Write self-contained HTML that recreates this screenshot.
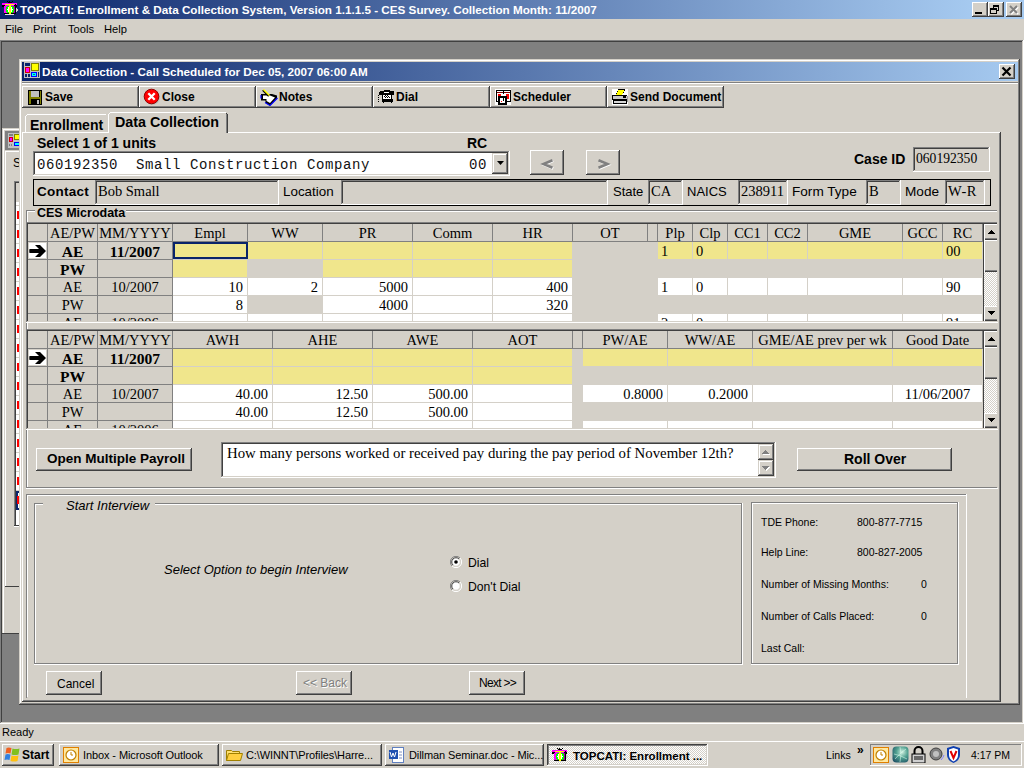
<!DOCTYPE html><html><head><meta charset="utf-8"><style>
html,body{margin:0;padding:0;width:1024px;height:768px;overflow:hidden;background:#d4d0c8;position:relative}
div{position:absolute;box-sizing:border-box;white-space:nowrap}
.s{font-family:"Liberation Sans",sans-serif;font-size:11px;color:#000;line-height:1}
.b{font-family:"Liberation Sans",sans-serif;font-weight:bold;font-size:12px;color:#000;line-height:1}
.r{font-family:"Liberation Serif",serif;font-size:15px;color:#000;line-height:1}
.m{font-family:"Liberation Mono",monospace;font-size:15px;color:#000;line-height:1}
svg{position:absolute}
</style></head><body>
<div style="left:0px;top:0px;width:1024px;height:19px;background:linear-gradient(to right,#0a246a 0px,#a6caf0 975px,#a6caf0 1024px)"></div>
<svg style="left:0px;top:0px" width="19" height="17" viewBox="0 0 19 17" shape-rendering="crispEdges"><rect x="2" y="3" width="15" height="3" fill="#ff00ff"/><rect x="2" y="5" width="3" height="2" fill="#000"/><rect x="14" y="5" width="3" height="2" fill="#000"/><rect x="4" y="6" width="11" height="8" fill="#ff00ff"/><rect x="11" y="6" width="4" height="8" fill="#a000a0"/><rect x="15" y="4" width="1" height="10" fill="#000"/><rect x="4" y="13" width="12" height="1" fill="#000"/><circle cx="10" cy="9.5" r="3.3" fill="#fff" stroke="#00ff00" stroke-width="1.4"/><rect x="5" y="4" width="9" height="1" fill="#ffff00"/><rect x="9" y="4" width="2" height="11" fill="#ffff00"/><rect x="7" y="1" width="1" height="1" fill="#000"/><rect x="9" y="1" width="1" height="1" fill="#000"/><rect x="12" y="1" width="1" height="1" fill="#000"/><rect x="8" y="2" width="4" height="1" fill="#000"/><rect x="5" y="14" width="9" height="1" fill="#e0e0e0"/><path d="M16 7l2 3-2 3z" fill="#d0d0d0"/></svg>
<div class="b" style="left:20px;top:3px;color:#fff;font-size:11.7px;line-height:13px">TOPCATI: Enrollment &amp; Data Collection System, Version 1.1.1.5 - CES Survey. Collection Month: 11/2007</div>
<div style="left:972px;top:2px;width:16px;height:15px;background:#d4d0c8;box-shadow:inset -1px -1px #404040,inset 1px 1px #ffffff,inset -2px -2px #808080,inset 2px 2px #d4d0c8"></div>
<div style="left:988px;top:2px;width:16px;height:15px;background:#d4d0c8;box-shadow:inset -1px -1px #404040,inset 1px 1px #ffffff,inset -2px -2px #808080,inset 2px 2px #d4d0c8"></div>
<div style="left:1006px;top:2px;width:16px;height:15px;background:#d4d0c8;box-shadow:inset -1px -1px #404040,inset 1px 1px #ffffff,inset -2px -2px #808080,inset 2px 2px #d4d0c8"></div>
<div style="left:975px;top:12px;width:7px;height:2px;background:#000"></div>
<div style="left:993px;top:5px;width:6px;height:6px;border:1px solid #000;border-top-width:2px"></div>
<div style="left:990px;top:8px;width:7px;height:6px;border:1px solid #000;border-top-width:2px;background:#d4d0c8"></div>
<svg style="left:1006px;top:2px" width="16" height="15" viewBox="0 0 16 15"><path d="M4 4l7 7M11 4l-7 7" stroke="#fff" stroke-width="2" transform="translate(1,1)"/><path d="M4 4l7 7M11 4l-7 7" stroke="#808080" stroke-width="2"/></svg>
<div class="s" style="left:5px;top:23px;font-size:11.2px;line-height:12px">File</div>
<div class="s" style="left:33px;top:23px;font-size:11.2px;line-height:12px">Print</div>
<div class="s" style="left:68px;top:23px;font-size:11.2px;line-height:12px">Tools</div>
<div class="s" style="left:104px;top:23px;font-size:11.2px;line-height:12px">Help</div>
<div style="left:0px;top:40px;width:1024px;height:684px;background:#808080"></div>
<div style="left:0px;top:40px;width:1023px;height:1px;background:#808080"></div>
<div style="left:1px;top:41px;width:1021px;height:1px;background:#404040"></div>
<div style="left:0px;top:40px;width:1px;height:683px;background:#808080"></div>
<div style="left:1px;top:41px;width:1px;height:681px;background:#404040"></div>
<div style="left:1022px;top:41px;width:1px;height:682px;background:#d4d0c8"></div>
<div style="left:1023px;top:40px;width:1px;height:684px;background:#ffffff"></div>
<div style="left:1px;top:722px;width:1022px;height:1px;background:#d4d0c8"></div>
<div style="left:0px;top:723px;width:1024px;height:1px;background:#ffffff"></div>
<div style="left:2px;top:128px;width:18px;height:506px;background:#d4d0c8"></div>
<div style="left:2px;top:128px;width:18px;height:1px;background:#d4d0c8"></div>
<div style="left:2px;top:128px;width:1px;height:506px;background:#d4d0c8"></div>
<div style="left:3px;top:129px;width:17px;height:1px;background:#ffffff"></div>
<div style="left:3px;top:129px;width:1px;height:505px;background:#ffffff"></div>
<div style="left:5px;top:131px;width:15px;height:19px;background:#808080"></div>
<svg style="left:8px;top:133px" width="12" height="15" viewBox="0 0 12 15"><rect x="0" y="0" width="12" height="15" fill="#c0c0c0"/><rect x="1" y="1" width="4" height="2" fill="#808080"/><rect x="1" y="4" width="4" height="5" fill="#d00000"/><rect x="2" y="5" width="2" height="3" fill="#ff00ff"/><rect x="6" y="1" width="6" height="6" fill="#808000"/><rect x="7" y="2" width="5" height="4" fill="#ffff00"/><rect x="6" y="9" width="6" height="4" fill="#0000ff"/><rect x="7" y="10" width="4" height="2" fill="#00ffff"/><rect x="1" y="11" width="1" height="2" fill="#808080"/><rect x="3" y="11" width="1" height="2" fill="#808080"/></svg>
<div style="left:5px;top:151px;width:15px;height:1px;background:#ffffff"></div>
<div style="left:5px;top:152px;width:1px;height:434px;background:#ffffff"></div>
<div class="s" style="left:13px;top:157px;font-size:12px;line-height:12px">S</div>
<div style="left:14px;top:181px;width:1px;height:345px;background:#808080"></div>
<div style="left:15px;top:182px;width:1px;height:343px;background:#404040"></div>
<div style="left:14px;top:181px;width:6px;height:1px;background:#808080"></div>
<div style="left:15px;top:182px;width:5px;height:1px;background:#404040"></div>
<div style="left:16px;top:183px;width:4px;height:18px;background:#d4d0c8"></div>
<div style="left:16px;top:202px;width:3px;height:323px;background:#fff"></div>
<div style="left:16px;top:205px;width:3px;height:1px;background:#d4d0c8"></div>
<div style="left:17px;top:211px;width:2px;height:8px;background:#ff0000"></div>
<div style="left:16px;top:224px;width:3px;height:1px;background:#d4d0c8"></div>
<div style="left:17px;top:230px;width:2px;height:8px;background:#ff0000"></div>
<div style="left:16px;top:243px;width:3px;height:1px;background:#d4d0c8"></div>
<div style="left:17px;top:249px;width:2px;height:8px;background:#ff0000"></div>
<div style="left:16px;top:262px;width:3px;height:1px;background:#d4d0c8"></div>
<div style="left:17px;top:268px;width:2px;height:8px;background:#ff0000"></div>
<div style="left:16px;top:281px;width:3px;height:1px;background:#d4d0c8"></div>
<div style="left:17px;top:287px;width:2px;height:8px;background:#ff0000"></div>
<div style="left:16px;top:300px;width:3px;height:1px;background:#d4d0c8"></div>
<div style="left:17px;top:306px;width:2px;height:8px;background:#ff0000"></div>
<div style="left:16px;top:319px;width:3px;height:1px;background:#d4d0c8"></div>
<div style="left:17px;top:325px;width:2px;height:8px;background:#ff0000"></div>
<div style="left:16px;top:338px;width:3px;height:1px;background:#d4d0c8"></div>
<div style="left:17px;top:344px;width:2px;height:8px;background:#ff0000"></div>
<div style="left:16px;top:357px;width:3px;height:1px;background:#d4d0c8"></div>
<div style="left:17px;top:363px;width:2px;height:8px;background:#ff0000"></div>
<div style="left:16px;top:376px;width:3px;height:1px;background:#d4d0c8"></div>
<div style="left:17px;top:382px;width:2px;height:8px;background:#ff0000"></div>
<div style="left:16px;top:395px;width:3px;height:1px;background:#d4d0c8"></div>
<div style="left:17px;top:401px;width:2px;height:8px;background:#ff0000"></div>
<div style="left:16px;top:414px;width:3px;height:1px;background:#d4d0c8"></div>
<div style="left:17px;top:420px;width:2px;height:8px;background:#ff0000"></div>
<div style="left:16px;top:433px;width:3px;height:1px;background:#d4d0c8"></div>
<div style="left:17px;top:439px;width:2px;height:8px;background:#ff0000"></div>
<div style="left:16px;top:452px;width:3px;height:1px;background:#d4d0c8"></div>
<div style="left:17px;top:458px;width:2px;height:8px;background:#ff0000"></div>
<div style="left:16px;top:471px;width:3px;height:1px;background:#d4d0c8"></div>
<div style="left:17px;top:477px;width:2px;height:8px;background:#ff0000"></div>
<div style="left:16px;top:490px;width:3px;height:1px;background:#d4d0c8"></div>
<div style="left:17px;top:496px;width:2px;height:8px;background:#ff0000"></div>
<div style="left:16px;top:509px;width:3px;height:1px;background:#d4d0c8"></div>
<div style="left:16px;top:491px;width:3px;height:19px;border:2px solid #0a246a;border-right:none"></div>
<div style="left:17px;top:496px;width:2px;height:8px;background:#ff0000"></div>
<div style="left:14px;top:525px;width:6px;height:1px;background:#404040"></div>
<div style="left:14px;top:526px;width:6px;height:1px;background:#ffffff"></div>
<div style="left:5px;top:586px;width:15px;height:1px;background:#404040"></div>
<div style="left:2px;top:633px;width:18px;height:1px;background:#404040"></div>
<div style="left:19px;top:59px;width:1001px;height:646px;background:#d4d0c8"></div>
<div style="left:19px;top:59px;width:1000px;height:1px;background:#d4d0c8"></div>
<div style="left:19px;top:59px;width:1px;height:645px;background:#d4d0c8"></div>
<div style="left:20px;top:60px;width:998px;height:1px;background:#ffffff"></div>
<div style="left:20px;top:60px;width:1px;height:643px;background:#ffffff"></div>
<div style="left:1018px;top:60px;width:1px;height:644px;background:#808080"></div>
<div style="left:20px;top:703px;width:999px;height:1px;background:#808080"></div>
<div style="left:1019px;top:59px;width:1px;height:646px;background:#404040"></div>
<div style="left:19px;top:704px;width:1001px;height:1px;background:#404040"></div>
<div style="left:22px;top:62px;width:996px;height:19px;background:linear-gradient(to right,#0a246a,#a6caf0)"></div>
<svg style="left:24px;top:62px" width="16" height="16" viewBox="0 0 16 16"><rect x="0" y="0" width="16" height="16" fill="#c0c0c0"/><rect x="1" y="1" width="5" height="3" fill="#0a246a"/><rect x="1" y="5" width="5" height="6" fill="#d00000"/><rect x="2" y="6" width="3" height="4" fill="#ff00ff"/><rect x="7" y="1" width="8" height="8" fill="#808000"/><rect x="8" y="2" width="6" height="6" fill="#ffff00"/><rect x="7" y="10" width="6" height="5" fill="#0000ff"/><rect x="8" y="11" width="4" height="3" fill="#00ffff"/><rect x="9" y="12" width="2" height="1" fill="#008080"/><rect x="1" y="12" width="2" height="3" fill="#0a246a"/><rect x="4" y="12" width="2" height="3" fill="#0a246a"/><rect x="14" y="10" width="1" height="5" fill="#0a246a"/></svg>
<div class="b" style="left:42px;top:65px;color:#fff;font-size:11.7px;line-height:13px">Data Collection - Call Scheduled for Dec 05, 2007 06:00 AM</div>
<div style="left:999px;top:64px;width:16px;height:15px;background:#d4d0c8;box-shadow:inset -1px -1px #404040,inset 1px 1px #ffffff,inset -2px -2px #808080,inset 2px 2px #d4d0c8"></div>
<svg style="left:999px;top:64px" width="16" height="15" viewBox="0 0 16 15"><path d="M3.5 3.5l8 8M11.5 3.5l-8 8" stroke="#000" stroke-width="2.2"/></svg>
<div style="left:22px;top:82px;width:996px;height:1px;background:#808080"></div>
<div style="left:22px;top:83px;width:996px;height:1px;background:#ffffff"></div>
<div style="left:22px;top:86px;width:117px;height:22px;background:#d4d0c8;box-shadow:inset -1px -1px #404040,inset 1px 1px #ffffff,inset -2px -2px #808080,inset 2px 2px #d4d0c8"></div>
<div class="b" style="left:45px;top:91px;font-size:12px;line-height:12px">Save</div>
<div style="left:139px;top:86px;width:117px;height:22px;background:#d4d0c8;box-shadow:inset -1px -1px #404040,inset 1px 1px #ffffff,inset -2px -2px #808080,inset 2px 2px #d4d0c8"></div>
<div class="b" style="left:162px;top:91px;font-size:12px;line-height:12px">Close</div>
<div style="left:256px;top:86px;width:117px;height:22px;background:#d4d0c8;box-shadow:inset -1px -1px #404040,inset 1px 1px #ffffff,inset -2px -2px #808080,inset 2px 2px #d4d0c8"></div>
<div class="b" style="left:279px;top:91px;font-size:12px;line-height:12px">Notes</div>
<div style="left:373px;top:86px;width:117px;height:22px;background:#d4d0c8;box-shadow:inset -1px -1px #404040,inset 1px 1px #ffffff,inset -2px -2px #808080,inset 2px 2px #d4d0c8"></div>
<div class="b" style="left:396px;top:91px;font-size:12px;line-height:12px">Dial</div>
<div style="left:490px;top:86px;width:117px;height:22px;background:#d4d0c8;box-shadow:inset -1px -1px #404040,inset 1px 1px #ffffff,inset -2px -2px #808080,inset 2px 2px #d4d0c8"></div>
<div class="b" style="left:513px;top:91px;font-size:12px;line-height:12px">Scheduler</div>
<div style="left:607px;top:86px;width:117px;height:22px;background:#d4d0c8;box-shadow:inset -1px -1px #404040,inset 1px 1px #ffffff,inset -2px -2px #808080,inset 2px 2px #d4d0c8"></div>
<div class="b" style="left:630px;top:91px;font-size:12px;line-height:12px">Send Document</div>
<svg style="left:28px;top:90px" width="14" height="15" viewBox="0 0 14 15" shape-rendering="crispEdges"><rect x="0" y="0" width="14" height="15" fill="#000"/><rect x="1" y="1" width="2" height="13" fill="#808000"/><rect x="12" y="1" width="1" height="13" fill="#808000"/><rect x="1" y="7" width="12" height="2" fill="#808000"/><rect x="3" y="1" width="8" height="6" fill="#c0c0c0"/><rect x="9" y="10" width="2" height="4" fill="#c0c0c0"/></svg>
<svg style="left:143px;top:88px" width="18" height="18" viewBox="0 0 18 18"><circle cx="9.5" cy="9.5" r="7.3" fill="#a0a8a8" opacity="0.6"/><circle cx="8.5" cy="8.5" r="7.3" fill="#ff0000" stroke="#900000" stroke-width="1"/><path d="M5.3 5.3l6.4 6.4M11.7 5.3l-6.4 6.4" stroke="#fff" stroke-width="2.3"/></svg>
<svg style="left:258px;top:86px" width="22" height="20" viewBox="0 0 22 20"><path d="M3 8H14L19 9.5V12.5L12 19.5L7.5 17V14.5H3Z" fill="#000"/><path d="M5 9.5H12L17 11.5L12 17L8.5 15V13H5Z" fill="#fff"/><path d="M3 9V12.5" stroke="#0000ff" stroke-width="1.2"/><path d="M7 16.5L12 19.5L19.5 12" stroke="#0000ff" stroke-width="1.2" fill="none"/><path d="M5.5 3.5L11.5 9.5" stroke="#000" stroke-width="1.6" transform="translate(-0.8,0.8)"/><path d="M5.5 3.5L11.5 9.5" stroke="#ffff00" stroke-width="1.4"/></svg>
<svg style="left:374px;top:86px" width="22" height="20" viewBox="0 0 22 20" shape-rendering="crispEdges"><rect x="10" y="4" width="6" height="2" fill="#000"/><rect x="6" y="5" width="14" height="3" fill="#000"/><rect x="5" y="6" width="3" height="3" fill="#000"/><rect x="17" y="5" width="3" height="4" fill="#000"/><rect x="10" y="6" width="5" height="1" fill="#fff"/><rect x="8" y="8" width="10" height="5" fill="#000"/><rect x="9" y="9" width="8" height="4" fill="#fff"/><rect x="10" y="10" width="1" height="1" fill="#000"/><rect x="11" y="9" width="1" height="1" fill="#000"/><rect x="12" y="10" width="1" height="1" fill="#000"/><rect x="13" y="9" width="1" height="1" fill="#000"/><rect x="14" y="10" width="1" height="1" fill="#000"/><rect x="15" y="11" width="1" height="1" fill="#000"/><rect x="11" y="11" width="1" height="1" fill="#000"/><rect x="13" y="11" width="1" height="1" fill="#000"/><rect x="8" y="13" width="11" height="3" fill="#000"/><rect x="9" y="16" width="1" height="1" fill="#000"/><rect x="17" y="16" width="1" height="1" fill="#000"/><rect x="4" y="9" width="1" height="1" fill="#000"/><rect x="4" y="11" width="1" height="1" fill="#000"/><rect x="4" y="13" width="1" height="1" fill="#000"/><rect x="4" y="15" width="1" height="1" fill="#000"/></svg>
<svg style="left:492px;top:86px" width="20" height="20" viewBox="0 0 20 20" shape-rendering="crispEdges"><rect x="3" y="3" width="16" height="16" fill="#fff"/><rect x="4" y="4" width="15" height="12" fill="#000"/><rect x="5" y="5" width="13" height="10" fill="#fff"/><rect x="5" y="6" width="13" height="1" fill="#800000"/><rect x="11" y="5" width="1" height="3" fill="#000"/><rect x="6" y="8" width="3" height="2" fill="#ff0000"/><rect x="14" y="8" width="3" height="3" fill="#ff0000"/><rect x="15" y="11" width="2" height="2" fill="#ff0000"/><rect x="6" y="10" width="9" height="9" fill="#000"/><rect x="8" y="12" width="5" height="5" fill="#fff"/><rect x="11" y="12" width="1" height="3" fill="#000"/><rect x="9" y="15" width="1" height="1" fill="#ff0000"/></svg>
<svg style="left:608px;top:86px" width="22" height="20" viewBox="0 0 22 20" shape-rendering="crispEdges"><rect x="4" y="3" width="16" height="16" fill="#fff"/><rect x="10" y="3" width="7" height="1" fill="#000"/><rect x="16" y="4" width="1" height="1" fill="#000"/><rect x="10" y="4" width="6" height="2" fill="#ffff00"/><rect x="9" y="6" width="6" height="2" fill="#ffff00"/><rect x="8" y="8" width="6" height="1" fill="#ffff00"/><rect x="9" y="5" width="1" height="1" fill="#000"/><rect x="8" y="7" width="1" height="1" fill="#000"/><rect x="15" y="6" width="1" height="1" fill="#000"/><rect x="4" y="9" width="15" height="5" fill="#000"/><rect x="5" y="10" width="14" height="3" fill="#c8c8c8"/><rect x="15" y="10" width="3" height="2" fill="#000"/><rect x="19" y="10" width="1" height="6" fill="#a0a0a0"/><rect x="5" y="14" width="14" height="4" fill="#000"/><rect x="6" y="15" width="12" height="2" fill="#d8d8d8"/></svg>
<div style="left:22px;top:132px;width:979px;height:570px;background:#d4d0c8"></div>
<div style="left:22px;top:132px;width:978px;height:1px;background:#ffffff"></div>
<div style="left:22px;top:132px;width:1px;height:569px;background:#ffffff"></div>
<div style="left:999px;top:133px;width:1px;height:568px;background:#808080"></div>
<div style="left:1000px;top:132px;width:1px;height:570px;background:#404040"></div>
<div style="left:23px;top:700px;width:977px;height:1px;background:#808080"></div>
<div style="left:22px;top:701px;width:979px;height:1px;background:#404040"></div>
<div style="left:27px;top:114px;width:79px;height:1px;background:#ffffff"></div>
<div style="left:26px;top:115px;width:1px;height:1px;background:#ffffff"></div>
<div style="left:25px;top:116px;width:1px;height:16px;background:#ffffff"></div>
<div class="b" style="left:30px;top:118px;font-size:14px;line-height:14px">Enrollment</div>
<div style="left:108px;top:112px;width:120px;height:21px;background:#d4d0c8"></div>
<div style="left:110px;top:112px;width:116px;height:1px;background:#ffffff"></div>
<div style="left:109px;top:113px;width:1px;height:1px;background:#ffffff"></div>
<div style="left:108px;top:114px;width:1px;height:19px;background:#ffffff"></div>
<div style="left:226px;top:114px;width:1px;height:19px;background:#808080"></div>
<div style="left:227px;top:114px;width:1px;height:19px;background:#404040"></div>
<div style="left:226px;top:113px;width:1px;height:1px;background:#404040"></div>
<div class="b" style="left:115px;top:115px;font-size:14.3px;line-height:14px">Data Collection</div>
<div class="b" style="left:37px;top:136px;font-size:14px;line-height:14px">Select 1 of 1 units</div>
<div class="b" style="left:467px;top:136px;font-size:14px;line-height:14px">RC</div>
<div style="left:33px;top:151px;width:477px;height:25px;background:#ffffff;box-shadow:inset -1px -1px #ffffff,inset 1px 1px #808080,inset -2px -2px #d4d0c8,inset 2px 2px #404040"></div>
<div class="m" style="left:37px;top:158px;font-size:14px;line-height:15px;letter-spacing:0.6px;color:#111">060192350&nbsp;&nbsp;Small Construction Company</div>
<div class="m" style="left:469px;top:158px;font-size:14px;line-height:15px;letter-spacing:0.6px;color:#111">00</div>
<div style="left:492px;top:153px;width:16px;height:21px;background:#d4d0c8;box-shadow:inset -1px -1px #404040,inset 1px 1px #d4d0c8,inset -2px -2px #808080,inset 2px 2px #ffffff"></div>
<svg style="left:496px;top:160px" width="9" height="6" viewBox="0 0 9 6"><path d="M1 1h7l-3.5 4z" fill="#000"/></svg>
<div style="left:530px;top:150px;width:34px;height:25px;background:#d4d0c8;box-shadow:inset -1px -1px #404040,inset 1px 1px #ffffff,inset -2px -2px #808080,inset 2px 2px #d4d0c8"></div>
<div style="left:586px;top:150px;width:34px;height:25px;background:#d4d0c8;box-shadow:inset -1px -1px #404040,inset 1px 1px #ffffff,inset -2px -2px #808080,inset 2px 2px #d4d0c8"></div>
<svg style="left:530px;top:150px" width="90" height="25" viewBox="0 0 90 25"><path d="M22.5 10.2L13.5 14L22.5 17.8" stroke="#fff" stroke-width="2.6" fill="none" transform="translate(0.7,0.7)"/><path d="M22.5 10.2L13.5 14L22.5 17.8" stroke="#808080" stroke-width="2.6" fill="none"/><path d="M68.5 10.2L77.5 14L68.5 17.8" stroke="#fff" stroke-width="2.6" fill="none" transform="translate(0.7,0.7)"/><path d="M68.5 10.2L77.5 14L68.5 17.8" stroke="#808080" stroke-width="2.6" fill="none"/></svg>
<div class="b" style="left:854px;top:152px;font-size:14px;line-height:14px">Case ID</div>
<div style="left:913px;top:147px;width:77px;height:25px;background:#d4d0c8;box-shadow:inset -1px -1px #ffffff,inset 1px 1px #808080,inset -2px -2px #d4d0c8,inset 2px 2px #404040"></div>
<div class="r" style="left:916px;top:151px;font-size:13.6px;line-height:15px">060192350</div>
<div style="left:33px;top:179px;width:958px;height:27px;border:1px solid #000;background:#d4d0c8"></div>
<div class="b" style="left:37px;top:185px;font-size:13.5px;line-height:14px;letter-spacing:0.25px">Contact</div>
<div style="left:95px;top:180px;width:184px;height:25px;background:#d4d0c8;box-shadow:inset -1px -1px #ffffff,inset 1px 1px #808080,inset -2px -2px #d4d0c8,inset 2px 2px #404040"></div>
<div class="r" style="left:98px;top:184px;font-size:14.5px;line-height:15px">Bob Small</div>
<div class="s" style="left:283px;top:185px;font-size:13.4px;line-height:14px">Location</div>
<div style="left:341px;top:180px;width:267px;height:25px;background:#d4d0c8;box-shadow:inset -1px -1px #ffffff,inset 1px 1px #808080,inset -2px -2px #d4d0c8,inset 2px 2px #404040"></div>
<div class="s" style="left:613px;top:185px;font-size:13px;line-height:14px">State</div>
<div style="left:648px;top:180px;width:35px;height:25px;background:#d4d0c8;box-shadow:inset -1px -1px #ffffff,inset 1px 1px #808080,inset -2px -2px #d4d0c8,inset 2px 2px #404040"></div>
<div class="r" style="left:651px;top:184px;font-size:14.5px;line-height:15px">CA</div>
<div class="s" style="left:687px;top:185px;font-size:13px;line-height:14px">NAICS</div>
<div style="left:738px;top:180px;width:50px;height:25px;background:#d4d0c8;box-shadow:inset -1px -1px #ffffff,inset 1px 1px #808080,inset -2px -2px #d4d0c8,inset 2px 2px #404040"></div>
<div class="r" style="left:741px;top:184px;font-size:14.5px;line-height:15px">238911</div>
<div class="s" style="left:792px;top:185px;font-size:13.6px;line-height:14px">Form Type</div>
<div style="left:866px;top:180px;width:35px;height:25px;background:#d4d0c8;box-shadow:inset -1px -1px #ffffff,inset 1px 1px #808080,inset -2px -2px #d4d0c8,inset 2px 2px #404040"></div>
<div class="r" style="left:869px;top:184px;font-size:14.5px;line-height:15px">B</div>
<div class="s" style="left:905px;top:185px;font-size:13.6px;line-height:14px">Mode</div>
<div style="left:945px;top:180px;width:40px;height:25px;background:#d4d0c8;box-shadow:inset -1px -1px #ffffff,inset 1px 1px #808080,inset -2px -2px #d4d0c8,inset 2px 2px #404040"></div>
<div class="r" style="left:948px;top:184px;font-size:14.5px;line-height:15px;letter-spacing:0.5px">W-R</div>
<div style="left:26px;top:210px;width:9px;height:1px;background:#808080"></div>
<div style="left:27px;top:211px;width:8px;height:1px;background:#ffffff"></div>
<div class="b" style="left:37px;top:207px;font-size:12.5px;line-height:13px">CES Microdata</div>
<div style="left:126px;top:210px;width:871px;height:1px;background:#808080"></div>
<div style="left:126px;top:211px;width:871px;height:1px;background:#ffffff"></div>
<div style="left:26px;top:210px;width:1px;height:279px;background:#808080"></div>
<div style="left:27px;top:211px;width:1px;height:277px;background:#ffffff"></div>
<div style="left:26px;top:487px;width:971px;height:1px;background:#808080"></div>
<div style="left:26px;top:488px;width:972px;height:1px;background:#ffffff"></div>
<div style="left:26px;top:222px;width:972px;height:101px;background:#d4d0c8"></div>
<div style="left:26px;top:222px;width:971px;height:1px;background:#808080"></div>
<div style="left:26px;top:222px;width:1px;height:100px;background:#808080"></div>
<div style="left:27px;top:223px;width:970px;height:1px;background:#404040"></div>
<div style="left:27px;top:223px;width:1px;height:98px;background:#404040"></div>
<div style="left:26px;top:322px;width:972px;height:1px;background:#ffffff"></div>
<div style="left:47px;top:224px;width:1px;height:17px;background:#808080"></div>
<div style="left:97px;top:224px;width:1px;height:17px;background:#808080"></div>
<div class="r" style="left:48px;top:225px;width:49px;height:17px;line-height:17px;text-align:center;font-size:14.5px">AE/PW</div>
<div style="left:172px;top:224px;width:1px;height:17px;background:#808080"></div>
<div class="r" style="left:98px;top:225px;width:74px;height:17px;line-height:17px;text-align:center;font-size:14.5px">MM/YYYY</div>
<div style="left:247px;top:224px;width:1px;height:17px;background:#808080"></div>
<div class="r" style="left:173px;top:225px;width:74px;height:17px;line-height:17px;text-align:center;font-size:14.5px">Empl</div>
<div style="left:322px;top:224px;width:1px;height:17px;background:#808080"></div>
<div class="r" style="left:248px;top:225px;width:74px;height:17px;line-height:17px;text-align:center;font-size:14.5px">WW</div>
<div style="left:412px;top:224px;width:1px;height:17px;background:#808080"></div>
<div class="r" style="left:323px;top:225px;width:89px;height:17px;line-height:17px;text-align:center;font-size:14.5px">PR</div>
<div style="left:492px;top:224px;width:1px;height:17px;background:#808080"></div>
<div class="r" style="left:413px;top:225px;width:79px;height:17px;line-height:17px;text-align:center;font-size:14.5px">Comm</div>
<div style="left:572px;top:224px;width:1px;height:17px;background:#808080"></div>
<div class="r" style="left:493px;top:225px;width:79px;height:17px;line-height:17px;text-align:center;font-size:14.5px">HR</div>
<div style="left:647px;top:224px;width:1px;height:17px;background:#808080"></div>
<div class="r" style="left:573px;top:225px;width:74px;height:17px;line-height:17px;text-align:center;font-size:14.5px">OT</div>
<div style="left:657px;top:224px;width:1px;height:17px;background:#808080"></div>
<div style="left:692px;top:224px;width:1px;height:17px;background:#808080"></div>
<div class="r" style="left:658px;top:225px;width:34px;height:17px;line-height:17px;text-align:center;font-size:14.5px">Plp</div>
<div style="left:727px;top:224px;width:1px;height:17px;background:#808080"></div>
<div class="r" style="left:693px;top:225px;width:34px;height:17px;line-height:17px;text-align:center;font-size:14.5px">Clp</div>
<div style="left:767px;top:224px;width:1px;height:17px;background:#808080"></div>
<div class="r" style="left:728px;top:225px;width:39px;height:17px;line-height:17px;text-align:center;font-size:14.5px">CC1</div>
<div style="left:807px;top:224px;width:1px;height:17px;background:#808080"></div>
<div class="r" style="left:768px;top:225px;width:39px;height:17px;line-height:17px;text-align:center;font-size:14.5px">CC2</div>
<div style="left:902px;top:224px;width:1px;height:17px;background:#808080"></div>
<div class="r" style="left:808px;top:225px;width:94px;height:17px;line-height:17px;text-align:center;font-size:14.5px">GME</div>
<div style="left:942px;top:224px;width:1px;height:17px;background:#808080"></div>
<div class="r" style="left:903px;top:225px;width:39px;height:17px;line-height:17px;text-align:center;font-size:14.5px">GCC</div>
<div style="left:982px;top:224px;width:1px;height:17px;background:#808080"></div>
<div class="r" style="left:943px;top:225px;width:39px;height:17px;line-height:17px;text-align:center;font-size:14.5px">RC</div>
<div style="left:28px;top:241px;width:955px;height:1px;background:#808080"></div>
<div style="left:47px;top:242px;width:1px;height:18px;background:#808080"></div>
<div style="left:97px;top:242px;width:1px;height:18px;background:#808080"></div>
<div style="left:172px;top:242px;width:1px;height:18px;background:#808080"></div>
<div style="left:28px;top:259px;width:145px;height:1px;background:#808080"></div>
<div style="left:29px;top:243px;width:17px;height:15px;background:#fff"></div>
<svg style="left:29px;top:244px" width="17" height="14" viewBox="0 0 17 14"><path d="M6 1H11L17 7L11 13H6L10 9H0.5Q0 7 0.5 5H10Z" fill="#000"/></svg>
<div class="r" style="left:48px;top:243px;width:49px;height:16px;line-height:17px;text-align:center;overflow:hidden;font-size:14.5px;font-weight:bold;font-size:15.6px;">AE</div>
<div class="r" style="left:98px;top:243px;width:74px;height:16px;line-height:17px;text-align:center;overflow:hidden;font-size:14.5px;font-weight:bold;font-size:15.6px;">11/2007</div>
<div style="left:173px;top:242px;width:74px;height:17px;background:#f0e68c"></div>
<div style="left:248px;top:242px;width:74px;height:17px;background:#f0e68c"></div>
<div style="left:323px;top:242px;width:89px;height:17px;background:#f0e68c"></div>
<div style="left:413px;top:242px;width:79px;height:17px;background:#f0e68c"></div>
<div style="left:493px;top:242px;width:79px;height:17px;background:#f0e68c"></div>
<div style="left:658px;top:242px;width:34px;height:17px;background:#f0e68c"></div>
<div class="r" style="left:658px;top:243px;width:34px;height:16px;line-height:17px;overflow:hidden;font-size:14.5px;padding-left:3px;text-align:left">1</div>
<div style="left:693px;top:242px;width:34px;height:17px;background:#f0e68c"></div>
<div class="r" style="left:693px;top:243px;width:34px;height:16px;line-height:17px;overflow:hidden;font-size:14.5px;padding-left:3px;text-align:left">0</div>
<div style="left:728px;top:242px;width:39px;height:17px;background:#f0e68c"></div>
<div style="left:768px;top:242px;width:39px;height:17px;background:#f0e68c"></div>
<div style="left:808px;top:242px;width:94px;height:17px;background:#f0e68c"></div>
<div style="left:903px;top:242px;width:39px;height:17px;background:#f0e68c"></div>
<div style="left:943px;top:242px;width:39px;height:17px;background:#f0e68c"></div>
<div class="r" style="left:943px;top:243px;width:39px;height:16px;line-height:17px;overflow:hidden;font-size:14.5px;padding-left:3px;text-align:left">00</div>
<div style="left:47px;top:260px;width:1px;height:18px;background:#808080"></div>
<div style="left:97px;top:260px;width:1px;height:18px;background:#808080"></div>
<div style="left:172px;top:260px;width:1px;height:18px;background:#808080"></div>
<div style="left:28px;top:277px;width:145px;height:1px;background:#808080"></div>
<div class="r" style="left:48px;top:261px;width:49px;height:16px;line-height:17px;text-align:center;overflow:hidden;font-size:14.5px;font-weight:bold;font-size:15.6px;">PW</div>
<div class="r" style="left:98px;top:261px;width:74px;height:16px;line-height:17px;text-align:center;overflow:hidden;font-size:14.5px;font-weight:bold;font-size:15.6px;"></div>
<div style="left:173px;top:260px;width:74px;height:17px;background:#f0e68c"></div>
<div style="left:323px;top:260px;width:89px;height:17px;background:#f0e68c"></div>
<div style="left:413px;top:260px;width:79px;height:17px;background:#f0e68c"></div>
<div style="left:493px;top:260px;width:79px;height:17px;background:#f0e68c"></div>
<div style="left:47px;top:278px;width:1px;height:18px;background:#808080"></div>
<div style="left:97px;top:278px;width:1px;height:18px;background:#808080"></div>
<div style="left:172px;top:278px;width:1px;height:18px;background:#808080"></div>
<div style="left:28px;top:295px;width:145px;height:1px;background:#808080"></div>
<div class="r" style="left:48px;top:279px;width:49px;height:16px;line-height:17px;text-align:center;overflow:hidden;font-size:14.5px;">AE</div>
<div class="r" style="left:98px;top:279px;width:74px;height:16px;line-height:17px;text-align:center;overflow:hidden;font-size:14.5px;">10/2007</div>
<div style="left:173px;top:278px;width:74px;height:17px;background:#ffffff"></div>
<div class="r" style="left:173px;top:279px;width:74px;height:16px;line-height:17px;overflow:hidden;font-size:14.5px;padding-right:4px;text-align:right">10</div>
<div style="left:248px;top:278px;width:74px;height:17px;background:#ffffff"></div>
<div class="r" style="left:248px;top:279px;width:74px;height:16px;line-height:17px;overflow:hidden;font-size:14.5px;padding-right:4px;text-align:right">2</div>
<div style="left:323px;top:278px;width:89px;height:17px;background:#ffffff"></div>
<div class="r" style="left:323px;top:279px;width:89px;height:16px;line-height:17px;overflow:hidden;font-size:14.5px;padding-right:4px;text-align:right">5000</div>
<div style="left:413px;top:278px;width:79px;height:17px;background:#ffffff"></div>
<div style="left:493px;top:278px;width:79px;height:17px;background:#ffffff"></div>
<div class="r" style="left:493px;top:279px;width:79px;height:16px;line-height:17px;overflow:hidden;font-size:14.5px;padding-right:4px;text-align:right">400</div>
<div style="left:658px;top:278px;width:34px;height:17px;background:#ffffff"></div>
<div class="r" style="left:658px;top:279px;width:34px;height:16px;line-height:17px;overflow:hidden;font-size:14.5px;padding-left:3px;text-align:left">1</div>
<div style="left:693px;top:278px;width:34px;height:17px;background:#ffffff"></div>
<div class="r" style="left:693px;top:279px;width:34px;height:16px;line-height:17px;overflow:hidden;font-size:14.5px;padding-left:3px;text-align:left">0</div>
<div style="left:728px;top:278px;width:39px;height:17px;background:#ffffff"></div>
<div style="left:768px;top:278px;width:39px;height:17px;background:#ffffff"></div>
<div style="left:808px;top:278px;width:94px;height:17px;background:#ffffff"></div>
<div style="left:903px;top:278px;width:39px;height:17px;background:#ffffff"></div>
<div style="left:943px;top:278px;width:39px;height:17px;background:#ffffff"></div>
<div class="r" style="left:943px;top:279px;width:39px;height:16px;line-height:17px;overflow:hidden;font-size:14.5px;padding-left:3px;text-align:left">90</div>
<div style="left:47px;top:296px;width:1px;height:18px;background:#808080"></div>
<div style="left:97px;top:296px;width:1px;height:18px;background:#808080"></div>
<div style="left:172px;top:296px;width:1px;height:18px;background:#808080"></div>
<div style="left:28px;top:313px;width:145px;height:1px;background:#808080"></div>
<div class="r" style="left:48px;top:297px;width:49px;height:16px;line-height:17px;text-align:center;overflow:hidden;font-size:14.5px;">PW</div>
<div class="r" style="left:98px;top:297px;width:74px;height:16px;line-height:17px;text-align:center;overflow:hidden;font-size:14.5px;"></div>
<div style="left:173px;top:296px;width:74px;height:17px;background:#ffffff"></div>
<div class="r" style="left:173px;top:297px;width:74px;height:16px;line-height:17px;overflow:hidden;font-size:14.5px;padding-right:4px;text-align:right">8</div>
<div style="left:323px;top:296px;width:89px;height:17px;background:#ffffff"></div>
<div class="r" style="left:323px;top:297px;width:89px;height:16px;line-height:17px;overflow:hidden;font-size:14.5px;padding-right:4px;text-align:right">4000</div>
<div style="left:413px;top:296px;width:79px;height:17px;background:#ffffff"></div>
<div style="left:493px;top:296px;width:79px;height:17px;background:#ffffff"></div>
<div class="r" style="left:493px;top:297px;width:79px;height:16px;line-height:17px;overflow:hidden;font-size:14.5px;padding-right:4px;text-align:right">320</div>
<div style="left:47px;top:314px;width:1px;height:7px;background:#808080"></div>
<div style="left:97px;top:314px;width:1px;height:7px;background:#808080"></div>
<div style="left:172px;top:314px;width:1px;height:7px;background:#808080"></div>
<div class="r" style="left:48px;top:315px;width:49px;height:6px;line-height:17px;text-align:center;overflow:hidden;font-size:14.5px;">AE</div>
<div class="r" style="left:98px;top:315px;width:74px;height:6px;line-height:17px;text-align:center;overflow:hidden;font-size:14.5px;">10/2006</div>
<div style="left:173px;top:314px;width:74px;height:7px;background:#ffffff"></div>
<div style="left:248px;top:314px;width:74px;height:7px;background:#ffffff"></div>
<div style="left:323px;top:314px;width:89px;height:7px;background:#ffffff"></div>
<div style="left:413px;top:314px;width:79px;height:7px;background:#ffffff"></div>
<div style="left:493px;top:314px;width:79px;height:7px;background:#ffffff"></div>
<div style="left:658px;top:314px;width:34px;height:7px;background:#ffffff"></div>
<div class="r" style="left:658px;top:315px;width:34px;height:6px;line-height:17px;overflow:hidden;font-size:14.5px;padding-left:3px;text-align:left">2</div>
<div style="left:693px;top:314px;width:34px;height:7px;background:#ffffff"></div>
<div class="r" style="left:693px;top:315px;width:34px;height:6px;line-height:17px;overflow:hidden;font-size:14.5px;padding-left:3px;text-align:left">0</div>
<div style="left:728px;top:314px;width:39px;height:7px;background:#ffffff"></div>
<div style="left:768px;top:314px;width:39px;height:7px;background:#ffffff"></div>
<div style="left:808px;top:314px;width:94px;height:7px;background:#ffffff"></div>
<div style="left:903px;top:314px;width:39px;height:7px;background:#ffffff"></div>
<div style="left:943px;top:314px;width:39px;height:7px;background:#ffffff"></div>
<div class="r" style="left:943px;top:315px;width:39px;height:6px;line-height:17px;overflow:hidden;font-size:14.5px;padding-left:3px;text-align:left">91</div>
<div style="left:983px;top:224px;width:1px;height:97px;background:#404040"></div>
<div style="left:984px;top:224px;width:13px;height:97px;background-color:#fff;background-image:linear-gradient(45deg,#d4d0c8 25%,transparent 25%,transparent 75%,#d4d0c8 75%),linear-gradient(45deg,#d4d0c8 25%,transparent 25%,transparent 75%,#d4d0c8 75%);background-size:2px 2px;background-position:0 0,1px 1px"></div>
<div style="left:984px;top:224px;width:13px;height:16px;background:#d4d0c8;box-shadow:inset 1px 1px #ffffff,inset 0 -1px #404040,inset 0 -2px #808080"></div>
<svg style="left:988px;top:230px" width="7" height="4" viewBox="0 0 7 4"><path d="M3 0h1v1h1v1h1v1h1v1h-7v-1h1v-1h1v-1h1z" fill="#000"/></svg>
<div style="left:984px;top:240px;width:13px;height:32px;background:#d4d0c8;box-shadow:inset 1px 1px #ffffff,inset 0 -1px #404040,inset 0 -2px #808080"></div>
<div style="left:984px;top:306px;width:13px;height:15px;background:#d4d0c8;box-shadow:inset 1px 1px #ffffff,inset 0 -1px #404040,inset 0 -2px #808080"></div>
<svg style="left:988px;top:311px" width="7" height="4" viewBox="0 0 7 4"><path d="M0 0h7v1h-1v1h-1v1h-1v1h-1v-1h-1v-1h-1v-1h-1z" fill="#000"/></svg>
<div style="left:26px;top:329px;width:972px;height:101px;background:#d4d0c8"></div>
<div style="left:26px;top:329px;width:971px;height:1px;background:#808080"></div>
<div style="left:26px;top:329px;width:1px;height:100px;background:#808080"></div>
<div style="left:27px;top:330px;width:970px;height:1px;background:#404040"></div>
<div style="left:27px;top:330px;width:1px;height:98px;background:#404040"></div>
<div style="left:26px;top:429px;width:972px;height:1px;background:#ffffff"></div>
<div style="left:47px;top:331px;width:1px;height:17px;background:#808080"></div>
<div style="left:97px;top:331px;width:1px;height:17px;background:#808080"></div>
<div class="r" style="left:48px;top:332px;width:49px;height:17px;line-height:17px;text-align:center;font-size:14.5px">AE/PW</div>
<div style="left:172px;top:331px;width:1px;height:17px;background:#808080"></div>
<div class="r" style="left:98px;top:332px;width:74px;height:17px;line-height:17px;text-align:center;font-size:14.5px">MM/YYYY</div>
<div style="left:272px;top:331px;width:1px;height:17px;background:#808080"></div>
<div class="r" style="left:173px;top:332px;width:99px;height:17px;line-height:17px;text-align:center;font-size:14.5px">AWH</div>
<div style="left:372px;top:331px;width:1px;height:17px;background:#808080"></div>
<div class="r" style="left:273px;top:332px;width:99px;height:17px;line-height:17px;text-align:center;font-size:14.5px">AHE</div>
<div style="left:472px;top:331px;width:1px;height:17px;background:#808080"></div>
<div class="r" style="left:373px;top:332px;width:99px;height:17px;line-height:17px;text-align:center;font-size:14.5px">AWE</div>
<div style="left:572px;top:331px;width:1px;height:17px;background:#808080"></div>
<div class="r" style="left:473px;top:332px;width:99px;height:17px;line-height:17px;text-align:center;font-size:14.5px">AOT</div>
<div style="left:582px;top:331px;width:1px;height:17px;background:#808080"></div>
<div style="left:667px;top:331px;width:1px;height:17px;background:#808080"></div>
<div class="r" style="left:583px;top:332px;width:84px;height:17px;line-height:17px;text-align:center;font-size:14.5px">PW/AE</div>
<div style="left:752px;top:331px;width:1px;height:17px;background:#808080"></div>
<div class="r" style="left:668px;top:332px;width:84px;height:17px;line-height:17px;text-align:center;font-size:14.5px">WW/AE</div>
<div style="left:892px;top:331px;width:1px;height:17px;background:#808080"></div>
<div class="r" style="left:753px;top:332px;width:139px;height:17px;line-height:17px;text-align:center;font-size:14.5px">GME/AE prev per wk</div>
<div style="left:982px;top:331px;width:1px;height:17px;background:#808080"></div>
<div class="r" style="left:893px;top:332px;width:89px;height:17px;line-height:17px;text-align:center;font-size:14.5px">Good Date</div>
<div style="left:28px;top:348px;width:955px;height:1px;background:#808080"></div>
<div style="left:47px;top:349px;width:1px;height:18px;background:#808080"></div>
<div style="left:97px;top:349px;width:1px;height:18px;background:#808080"></div>
<div style="left:172px;top:349px;width:1px;height:18px;background:#808080"></div>
<div style="left:28px;top:366px;width:145px;height:1px;background:#808080"></div>
<div style="left:29px;top:350px;width:17px;height:15px;background:#fff"></div>
<svg style="left:29px;top:351px" width="17" height="14" viewBox="0 0 17 14"><path d="M6 1H11L17 7L11 13H6L10 9H0.5Q0 7 0.5 5H10Z" fill="#000"/></svg>
<div class="r" style="left:48px;top:350px;width:49px;height:16px;line-height:17px;text-align:center;overflow:hidden;font-size:14.5px;font-weight:bold;font-size:15.6px;">AE</div>
<div class="r" style="left:98px;top:350px;width:74px;height:16px;line-height:17px;text-align:center;overflow:hidden;font-size:14.5px;font-weight:bold;font-size:15.6px;">11/2007</div>
<div style="left:173px;top:349px;width:99px;height:17px;background:#f0e68c"></div>
<div style="left:273px;top:349px;width:99px;height:17px;background:#f0e68c"></div>
<div style="left:373px;top:349px;width:99px;height:17px;background:#f0e68c"></div>
<div style="left:473px;top:349px;width:99px;height:17px;background:#f0e68c"></div>
<div style="left:583px;top:349px;width:84px;height:17px;background:#f0e68c"></div>
<div style="left:668px;top:349px;width:84px;height:17px;background:#f0e68c"></div>
<div style="left:753px;top:349px;width:139px;height:17px;background:#f0e68c"></div>
<div style="left:893px;top:349px;width:89px;height:17px;background:#f0e68c"></div>
<div style="left:47px;top:367px;width:1px;height:18px;background:#808080"></div>
<div style="left:97px;top:367px;width:1px;height:18px;background:#808080"></div>
<div style="left:172px;top:367px;width:1px;height:18px;background:#808080"></div>
<div style="left:28px;top:384px;width:145px;height:1px;background:#808080"></div>
<div class="r" style="left:48px;top:368px;width:49px;height:16px;line-height:17px;text-align:center;overflow:hidden;font-size:14.5px;font-weight:bold;font-size:15.6px;">PW</div>
<div class="r" style="left:98px;top:368px;width:74px;height:16px;line-height:17px;text-align:center;overflow:hidden;font-size:14.5px;font-weight:bold;font-size:15.6px;"></div>
<div style="left:173px;top:367px;width:99px;height:17px;background:#f0e68c"></div>
<div style="left:273px;top:367px;width:99px;height:17px;background:#f0e68c"></div>
<div style="left:373px;top:367px;width:99px;height:17px;background:#f0e68c"></div>
<div style="left:473px;top:367px;width:99px;height:17px;background:#f0e68c"></div>
<div style="left:47px;top:385px;width:1px;height:18px;background:#808080"></div>
<div style="left:97px;top:385px;width:1px;height:18px;background:#808080"></div>
<div style="left:172px;top:385px;width:1px;height:18px;background:#808080"></div>
<div style="left:28px;top:402px;width:145px;height:1px;background:#808080"></div>
<div class="r" style="left:48px;top:386px;width:49px;height:16px;line-height:17px;text-align:center;overflow:hidden;font-size:14.5px;">AE</div>
<div class="r" style="left:98px;top:386px;width:74px;height:16px;line-height:17px;text-align:center;overflow:hidden;font-size:14.5px;">10/2007</div>
<div style="left:173px;top:385px;width:99px;height:17px;background:#ffffff"></div>
<div class="r" style="left:173px;top:386px;width:99px;height:16px;line-height:17px;overflow:hidden;font-size:14.5px;padding-right:4px;text-align:right">40.00</div>
<div style="left:273px;top:385px;width:99px;height:17px;background:#ffffff"></div>
<div class="r" style="left:273px;top:386px;width:99px;height:16px;line-height:17px;overflow:hidden;font-size:14.5px;padding-right:4px;text-align:right">12.50</div>
<div style="left:373px;top:385px;width:99px;height:17px;background:#ffffff"></div>
<div class="r" style="left:373px;top:386px;width:99px;height:16px;line-height:17px;overflow:hidden;font-size:14.5px;padding-right:4px;text-align:right">500.00</div>
<div style="left:473px;top:385px;width:99px;height:17px;background:#ffffff"></div>
<div style="left:583px;top:385px;width:84px;height:17px;background:#ffffff"></div>
<div class="r" style="left:583px;top:386px;width:84px;height:16px;line-height:17px;overflow:hidden;font-size:14.5px;padding-right:4px;text-align:right">0.8000</div>
<div style="left:668px;top:385px;width:84px;height:17px;background:#ffffff"></div>
<div class="r" style="left:668px;top:386px;width:84px;height:16px;line-height:17px;overflow:hidden;font-size:14.5px;padding-right:4px;text-align:right">0.2000</div>
<div style="left:753px;top:385px;width:139px;height:17px;background:#ffffff"></div>
<div style="left:893px;top:385px;width:89px;height:17px;background:#ffffff"></div>
<div class="r" style="left:893px;top:386px;width:89px;height:16px;line-height:17px;overflow:hidden;font-size:14.5px;text-align:center">11/06/2007</div>
<div style="left:47px;top:403px;width:1px;height:18px;background:#808080"></div>
<div style="left:97px;top:403px;width:1px;height:18px;background:#808080"></div>
<div style="left:172px;top:403px;width:1px;height:18px;background:#808080"></div>
<div style="left:28px;top:420px;width:145px;height:1px;background:#808080"></div>
<div class="r" style="left:48px;top:404px;width:49px;height:16px;line-height:17px;text-align:center;overflow:hidden;font-size:14.5px;">PW</div>
<div class="r" style="left:98px;top:404px;width:74px;height:16px;line-height:17px;text-align:center;overflow:hidden;font-size:14.5px;"></div>
<div style="left:173px;top:403px;width:99px;height:17px;background:#ffffff"></div>
<div class="r" style="left:173px;top:404px;width:99px;height:16px;line-height:17px;overflow:hidden;font-size:14.5px;padding-right:4px;text-align:right">40.00</div>
<div style="left:273px;top:403px;width:99px;height:17px;background:#ffffff"></div>
<div class="r" style="left:273px;top:404px;width:99px;height:16px;line-height:17px;overflow:hidden;font-size:14.5px;padding-right:4px;text-align:right">12.50</div>
<div style="left:373px;top:403px;width:99px;height:17px;background:#ffffff"></div>
<div class="r" style="left:373px;top:404px;width:99px;height:16px;line-height:17px;overflow:hidden;font-size:14.5px;padding-right:4px;text-align:right">500.00</div>
<div style="left:473px;top:403px;width:99px;height:17px;background:#ffffff"></div>
<div style="left:47px;top:421px;width:1px;height:7px;background:#808080"></div>
<div style="left:97px;top:421px;width:1px;height:7px;background:#808080"></div>
<div style="left:172px;top:421px;width:1px;height:7px;background:#808080"></div>
<div class="r" style="left:48px;top:422px;width:49px;height:6px;line-height:17px;text-align:center;overflow:hidden;font-size:14.5px;">AE</div>
<div class="r" style="left:98px;top:422px;width:74px;height:6px;line-height:17px;text-align:center;overflow:hidden;font-size:14.5px;">10/2006</div>
<div style="left:173px;top:421px;width:99px;height:7px;background:#ffffff"></div>
<div style="left:273px;top:421px;width:99px;height:7px;background:#ffffff"></div>
<div style="left:373px;top:421px;width:99px;height:7px;background:#ffffff"></div>
<div style="left:473px;top:421px;width:99px;height:7px;background:#ffffff"></div>
<div style="left:583px;top:421px;width:84px;height:7px;background:#ffffff"></div>
<div style="left:668px;top:421px;width:84px;height:7px;background:#ffffff"></div>
<div style="left:753px;top:421px;width:139px;height:7px;background:#ffffff"></div>
<div style="left:893px;top:421px;width:89px;height:7px;background:#ffffff"></div>
<div style="left:983px;top:331px;width:1px;height:97px;background:#404040"></div>
<div style="left:984px;top:331px;width:13px;height:97px;background-color:#fff;background-image:linear-gradient(45deg,#d4d0c8 25%,transparent 25%,transparent 75%,#d4d0c8 75%),linear-gradient(45deg,#d4d0c8 25%,transparent 25%,transparent 75%,#d4d0c8 75%);background-size:2px 2px;background-position:0 0,1px 1px"></div>
<div style="left:984px;top:331px;width:13px;height:16px;background:#d4d0c8;box-shadow:inset 1px 1px #ffffff,inset 0 -1px #404040,inset 0 -2px #808080"></div>
<svg style="left:988px;top:337px" width="7" height="4" viewBox="0 0 7 4"><path d="M3 0h1v1h1v1h1v1h1v1h-7v-1h1v-1h1v-1h1z" fill="#000"/></svg>
<div style="left:984px;top:347px;width:13px;height:32px;background:#d4d0c8;box-shadow:inset 1px 1px #ffffff,inset 0 -1px #404040,inset 0 -2px #808080"></div>
<div style="left:984px;top:413px;width:13px;height:15px;background:#d4d0c8;box-shadow:inset 1px 1px #ffffff,inset 0 -1px #404040,inset 0 -2px #808080"></div>
<svg style="left:988px;top:418px" width="7" height="4" viewBox="0 0 7 4"><path d="M0 0h7v1h-1v1h-1v1h-1v1h-1v-1h-1v-1h-1v-1h-1z" fill="#000"/></svg>
<div style="left:173px;top:242px;width:75px;height:17px;border:2px solid #0a246a"></div>
<div style="left:36px;top:448px;width:156px;height:23px;background:#d4d0c8;box-shadow:inset -1px -1px #404040,inset 1px 1px #ffffff,inset -2px -2px #808080,inset 2px 2px #d4d0c8"></div>
<div class="b" style="left:47px;top:452px;font-size:13.5px;line-height:14px">Open Multiple Payroll</div>
<div style="left:221px;top:442px;width:555px;height:36px;background:#ffffff;box-shadow:inset -1px -1px #ffffff,inset 1px 1px #808080,inset -2px -2px #d4d0c8,inset 2px 2px #404040"></div>
<div class="r" style="left:227px;top:446px;font-size:14.8px;line-height:15px">How many persons worked or received pay during the pay period of November 12th?</div>
<div style="left:758px;top:444px;width:16px;height:16px;background:#d4d0c8;box-shadow:inset -1px -1px #404040,inset 1px 1px #d4d0c8,inset -2px -2px #808080,inset 2px 2px #ffffff"></div>
<div style="left:758px;top:460px;width:16px;height:16px;background:#d4d0c8;box-shadow:inset -1px -1px #404040,inset 1px 1px #d4d0c8,inset -2px -2px #808080,inset 2px 2px #ffffff"></div>
<svg style="left:762px;top:450px" width="8" height="5" viewBox="0 0 8 5" shape-rendering="crispEdges"><path d="M4 1h1v1h1v1h1v1h1v1h-7v-1h1v-1h1v-1h1z" fill="#fff"/><path d="M3 0h1v1h1v1h1v1h1v1h-7v-1h1v-1h1v-1h1z" fill="#808080"/></svg>
<svg style="left:762px;top:466px" width="8" height="5" viewBox="0 0 8 5" shape-rendering="crispEdges"><path d="M1 1h7v1h-1v1h-1v1h-1v1h-1v-1h-1v-1h-1v-1h-1z" fill="#fff"/><path d="M0 0h7v1h-1v1h-1v1h-1v1h-1v-1h-1v-1h-1v-1h-1z" fill="#808080"/></svg>
<div style="left:797px;top:448px;width:155px;height:23px;background:#d4d0c8;box-shadow:inset -1px -1px #404040,inset 1px 1px #ffffff,inset -2px -2px #808080,inset 2px 2px #d4d0c8"></div>
<div class="b" style="left:844px;top:452px;font-size:14px;line-height:14px">Roll Over</div>
<div style="left:26px;top:494px;width:941px;height:1px;background:#808080"></div>
<div style="left:26px;top:494px;width:1px;height:204px;background:#808080"></div>
<div style="left:27px;top:495px;width:939px;height:1px;background:#ffffff"></div>
<div style="left:27px;top:495px;width:1px;height:202px;background:#ffffff"></div>
<div style="left:966px;top:494px;width:1px;height:204px;background:#ffffff"></div>
<div style="left:34px;top:503px;width:9px;height:1px;background:#808080"></div>
<div style="left:35px;top:504px;width:8px;height:1px;background:#ffffff"></div>
<div class="s" style="left:66px;top:499px;font-size:13px;line-height:13px;font-style:italic">Start Interview</div>
<div style="left:155px;top:503px;width:588px;height:1px;background:#808080"></div>
<div style="left:155px;top:504px;width:587px;height:1px;background:#ffffff"></div>
<div style="left:34px;top:503px;width:1px;height:161px;background:#808080"></div>
<div style="left:35px;top:504px;width:1px;height:159px;background:#ffffff"></div>
<div style="left:741px;top:503px;width:1px;height:161px;background:#808080"></div>
<div style="left:742px;top:503px;width:1px;height:162px;background:#ffffff"></div>
<div style="left:34px;top:663px;width:708px;height:1px;background:#808080"></div>
<div style="left:34px;top:664px;width:709px;height:1px;background:#ffffff"></div>
<div class="s" style="left:164px;top:563px;font-size:13px;line-height:13px;font-style:italic">Select Option to begin Interview</div>
<svg style="left:450px;top:556px" width="12" height="12" viewBox="0 0 12 12"><path d="M2 10A5.5 5.5 0 0 1 10 2" stroke="#808080" fill="none"/><path d="M10 2A5.5 5.5 0 0 1 2 10" stroke="#fff" fill="none"/><circle cx="6" cy="6" r="4.3" fill="#fff"/><path d="M3 9A4.2 4.2 0 0 1 9 3" stroke="#404040" fill="none"/><path d="M9 3A4.2 4.2 0 0 1 3 9" stroke="#d4d0c8" fill="none"/><circle cx="6" cy="6" r="1.8" fill="#000"/></svg>
<svg style="left:450px;top:580px" width="12" height="12" viewBox="0 0 12 12"><path d="M2 10A5.5 5.5 0 0 1 10 2" stroke="#808080" fill="none"/><path d="M10 2A5.5 5.5 0 0 1 2 10" stroke="#fff" fill="none"/><circle cx="6" cy="6" r="4.3" fill="#fff"/><path d="M3 9A4.2 4.2 0 0 1 9 3" stroke="#404040" fill="none"/><path d="M9 3A4.2 4.2 0 0 1 3 9" stroke="#d4d0c8" fill="none"/></svg>
<div class="s" style="left:468px;top:557px;font-size:12.2px;line-height:13px">Dial</div>
<div class="s" style="left:468px;top:581px;font-size:12.2px;line-height:13px">Don't Dial</div>
<div style="left:751px;top:502px;width:207px;height:1px;background:#808080"></div>
<div style="left:751px;top:502px;width:1px;height:162px;background:#808080"></div>
<div style="left:752px;top:503px;width:206px;height:1px;background:#ffffff"></div>
<div style="left:752px;top:503px;width:1px;height:161px;background:#ffffff"></div>
<div style="left:957px;top:502px;width:1px;height:162px;background:#808080"></div>
<div style="left:751px;top:663px;width:207px;height:1px;background:#808080"></div>
<div style="left:958px;top:502px;width:1px;height:163px;background:#ffffff"></div>
<div style="left:751px;top:664px;width:208px;height:1px;background:#ffffff"></div>
<div class="s" style="left:761px;top:517px;font-size:10.5px;line-height:11px">TDE Phone:</div>
<div class="s" style="left:857px;top:517px;font-size:10.5px;line-height:11px">800-877-7715</div>
<div class="s" style="left:761px;top:547px;font-size:10.5px;line-height:11px">Help Line:</div>
<div class="s" style="left:857px;top:547px;font-size:10.5px;line-height:11px">800-827-2005</div>
<div class="s" style="left:761px;top:579px;font-size:10.5px;line-height:11px">Number of Missing Months:</div>
<div class="s" style="left:921px;top:579px;font-size:10.5px;line-height:11px">0</div>
<div class="s" style="left:761px;top:611px;font-size:10.5px;line-height:11px">Number of Calls Placed:</div>
<div class="s" style="left:921px;top:611px;font-size:10.5px;line-height:11px">0</div>
<div class="s" style="left:761px;top:643px;font-size:10.5px;line-height:11px">Last Call:</div>
<div style="left:46px;top:671px;width:56px;height:24px;background:#d4d0c8;box-shadow:inset -1px -1px #404040,inset 1px 1px #ffffff,inset -2px -2px #808080,inset 2px 2px #d4d0c8"></div>
<div class="s" style="left:57px;top:677px;font-size:12px;line-height:13px;transform:scaleY(1.08);transform-origin:0 0">Cancel</div>
<div style="left:296px;top:671px;width:56px;height:24px;background:#d4d0c8;box-shadow:inset -1px -1px #404040,inset 1px 1px #ffffff,inset -2px -2px #808080,inset 2px 2px #d4d0c8"></div>
<div class="s" style="left:303px;top:677px;font-size:12px;line-height:13px;color:#808080;text-shadow:1px 1px 0 #fff">&lt;&lt; Back</div>
<div style="left:469px;top:671px;width:56px;height:24px;background:#d4d0c8;box-shadow:inset -1px -1px #404040,inset 1px 1px #ffffff,inset -2px -2px #808080,inset 2px 2px #d4d0c8"></div>
<div class="s" style="left:479px;top:677px;font-size:12px;line-height:13px;letter-spacing:-0.7px">Next &gt;&gt;</div>
<div class="s" style="left:2px;top:726px;font-size:11px;line-height:12px">Ready</div>
<div style="left:0px;top:741px;width:1024px;height:27px;background:#d4d0c8"></div>
<div style="left:0px;top:741px;width:1024px;height:1px;background:#ffffff"></div>
<div style="left:2px;top:744px;width:52px;height:22px;background:#d4d0c8;box-shadow:inset -1px -1px #404040,inset 1px 1px #ffffff,inset -2px -2px #808080,inset 2px 2px #d4d0c8"></div>
<svg style="left:4px;top:747px" width="16" height="15" viewBox="0 0 16 15"><path d="M2.5 1Q4.5 0 7.5 1L6.5 6.5Q4 5.5 1.5 6.5Z" fill="#f06020"/><path d="M8.5 1.5Q11.5 2.5 15.5 1.5L14.5 7.5Q11 8.5 7.5 7.5Z" fill="#80c020"/><path d="M1.5 7.5Q3.5 6.5 6.5 7.5L5.5 13Q3 12 0.5 13Z" fill="#3080e0"/><path d="M7.5 8.5Q10.5 9.5 14.5 8.5L13.5 14Q10 15 6.5 14Z" fill="#ffc010"/></svg>
<div class="b" style="left:22px;top:749px;font-size:12px;line-height:13px">Start</div>
<div style="left:59px;top:744px;width:160px;height:22px;background:#d4d0c8;box-shadow:inset -1px -1px #404040,inset 1px 1px #ffffff,inset -2px -2px #808080,inset 2px 2px #d4d0c8"></div>
<div class="s" style="left:83px;top:749px;font-size:11px;line-height:13px;letter-spacing:-0.1px">Inbox - Microsoft Outlook</div>
<div style="left:222px;top:744px;width:160px;height:22px;background:#d4d0c8;box-shadow:inset -1px -1px #404040,inset 1px 1px #ffffff,inset -2px -2px #808080,inset 2px 2px #d4d0c8"></div>
<div class="s" style="left:246px;top:749px;font-size:11px;line-height:13px;letter-spacing:-0.1px">C:\WINNT\Profiles\Harre...</div>
<div style="left:385px;top:744px;width:159px;height:22px;background:#d4d0c8;box-shadow:inset -1px -1px #404040,inset 1px 1px #ffffff,inset -2px -2px #808080,inset 2px 2px #d4d0c8"></div>
<div class="s" style="left:409px;top:749px;font-size:11px;line-height:13px;letter-spacing:-0.1px">Dillman Seminar.doc - Mic...</div>
<svg style="left:63px;top:747px" width="16" height="16" viewBox="0 0 16 16"><rect x="0.5" y="0.5" width="15" height="15" fill="#ffe8a0" stroke="#e08000"/><circle cx="8" cy="8" r="5" fill="#fff" stroke="#c08000" stroke-width="1.2"/><path d="M8 5v3h2" stroke="#c08000" fill="none"/></svg>
<svg style="left:226px;top:748px" width="17" height="14" viewBox="0 0 17 14"><path d="M0.5 2.5h5l1 1h7v9h-13z" fill="#ffe070" stroke="#a08000"/><path d="M2.5 5.5h14l-2 7h-14z" fill="#ffd040" stroke="#a08000"/></svg>
<svg style="left:389px;top:747px" width="16" height="16" viewBox="0 0 16 16"><rect x="3.5" y="0.5" width="11" height="15" fill="#fff" stroke="#6080c0"/><rect x="0" y="3" width="9" height="9" fill="#2050b0"/><path d="M1 5l1.5 5 1.5-4 1.5 4 1.5-5" stroke="#fff" fill="none"/><path d="M10 5h3M10 8h3M10 11h3" stroke="#8090c0"/></svg>
<div style="left:547px;top:744px;width:161px;height:22px;background-color:#fff;background-image:linear-gradient(45deg,#d4d0c8 25%,transparent 25%,transparent 75%,#d4d0c8 75%),linear-gradient(45deg,#d4d0c8 25%,transparent 25%,transparent 75%,#d4d0c8 75%);background-size:2px 2px;background-position:0 0,1px 1px;box-shadow:inset -1px -1px #fff,inset 1px 1px #404040,inset -2px -2px #d4d0c8,inset 2px 2px #808080"></div>
<svg style="left:550px;top:747px" width="19" height="17" viewBox="0 0 19 17" shape-rendering="crispEdges"><rect x="2" y="3" width="15" height="3" fill="#ff00ff"/><rect x="2" y="5" width="3" height="2" fill="#000"/><rect x="14" y="5" width="3" height="2" fill="#000"/><rect x="4" y="6" width="11" height="8" fill="#ff00ff"/><rect x="11" y="6" width="4" height="8" fill="#a000a0"/><rect x="15" y="4" width="1" height="10" fill="#000"/><rect x="4" y="13" width="12" height="1" fill="#000"/><circle cx="10" cy="9.5" r="3.3" fill="#fff" stroke="#00ff00" stroke-width="1.4"/><rect x="5" y="4" width="9" height="1" fill="#ffff00"/><rect x="9" y="4" width="2" height="11" fill="#ffff00"/><rect x="7" y="1" width="1" height="1" fill="#000"/><rect x="9" y="1" width="1" height="1" fill="#000"/><rect x="12" y="1" width="1" height="1" fill="#000"/><rect x="8" y="2" width="4" height="1" fill="#000"/><rect x="5" y="14" width="9" height="1" fill="#e0e0e0"/><path d="M16 7l2 3-2 3z" fill="#d0d0d0"/></svg>
<div class="b" style="left:573px;top:750px;font-size:11.5px;line-height:13px">TOPCATI: Enrollment ...</div>
<div class="s" style="left:826px;top:749px;font-size:10.6px;line-height:13px">Links</div>
<div class="b" style="left:857px;top:744px;font-size:12px;line-height:13px">&raquo;</div>
<div style="left:870px;top:744px;width:152px;height:22px;background:#d4d0c8;box-shadow:inset -1px -1px #ffffff,inset 1px 1px #808080"></div>
<svg style="left:873px;top:747px" width="16" height="16" viewBox="0 0 16 16"><rect x="0.5" y="0.5" width="15" height="15" fill="#ffe8a0" stroke="#e08000"/><circle cx="8" cy="8" r="5" fill="#fff" stroke="#c08000" stroke-width="1.2"/><path d="M8 5v3h2" stroke="#c08000" fill="none"/></svg>
<svg style="left:892px;top:746px" width="17" height="17" viewBox="0 0 17 17"><defs><radialGradient id="gl" cx="0.6" cy="0.35" r="0.8"><stop offset="0" stop-color="#d0f0e0"/><stop offset="0.45" stop-color="#50a090"/><stop offset="1" stop-color="#1a4a60"/></radialGradient></defs><rect x="0.5" y="0.5" width="16" height="16" rx="4" fill="url(#gl)"/><path d="M3 13q5-6 11-10M2 8q6 1 13 5M8 1q2 7 0 15" stroke="#e0fff0" stroke-width="0.7" fill="none" opacity="0.8"/></svg>
<svg style="left:911px;top:746px" width="15" height="17" viewBox="0 0 15 17"><path d="M3.5 8v-3a4 4 0 0 1 8 0v3" stroke="#000" stroke-width="2" fill="none"/><rect x="1" y="8" width="13" height="9" fill="#d0d0d0" stroke="#000"/><path d="M3 11h9M3 13h9" stroke="#000"/></svg>
<svg style="left:929px;top:747px" width="16" height="16" viewBox="0 0 16 16"><circle cx="7" cy="7" r="6" fill="#808080" stroke="#404040"/><circle cx="7" cy="7" r="3" fill="#c0c0c0"/><path d="M12 13q2-2 3-5" stroke="#8080ff" fill="none"/></svg>
<svg style="left:946px;top:746px" width="15" height="17" viewBox="0 0 15 17"><path d="M1 2l6.5-2 6.5 2v7q0 5-6.5 8-6.5-3-6.5-8z" fill="#1040b0"/><path d="M3 3.5l4.5-1.5 4.5 1.5v5.5q0 4-4.5 6.5-4.5-2.5-4.5-6.5z" fill="#fff"/><path d="M4.5 5l3 7 3-7" stroke="#e00000" stroke-width="2" fill="none"/></svg>
<div class="s" style="left:971px;top:749px;font-size:10.5px;line-height:13px">4:17 PM</div>
</body></html>
